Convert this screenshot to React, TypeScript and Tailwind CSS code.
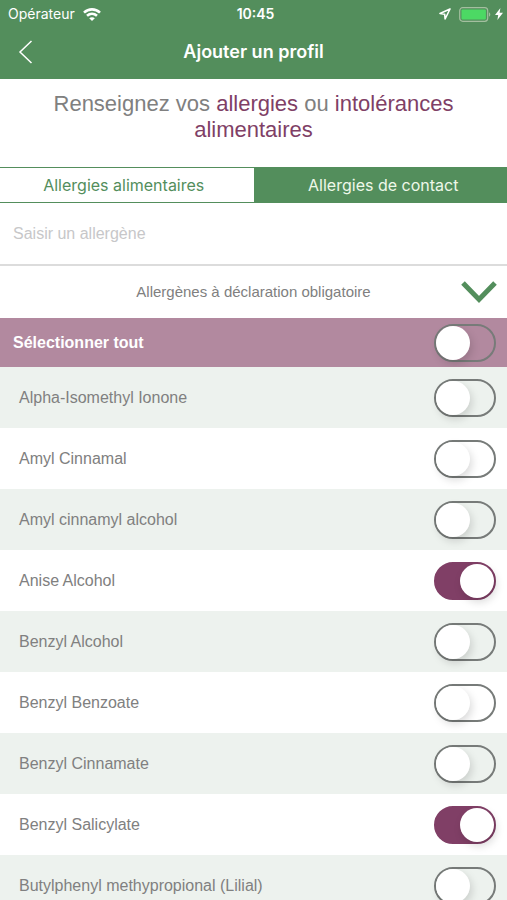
import React, { useState } from 'react';

const allergens = [
  'Alpha-Isomethyl Ionone',
  'Amyl Cinnamal',
  'Amyl cinnamyl alcohol',
  'Anise Alcohol',
  'Benzyl Alcohol',
  'Benzyl Benzoate',
  'Benzyl Cinnamate',
  'Benzyl Salicylate',
  'Butylphenyl methypropional (Lilial)',
];

function StatusBar() {
  return (
    <div className="grid h-7 grid-cols-3 items-center pl-2 pr-1 font-['Inter',sans-serif] text-sm">
      <div className="flex items-center gap-2">
        <span>Opérateur</span>
        <svg width="18" height="13" viewBox="0 0 18 13" fill="none" stroke="currentColor" strokeWidth="2.6" aria-hidden="true">
          <path d="M1 4.6C5.6.3 12.4.3 17 4.6" />
          <path d="M4 7.8c3-2.7 7-2.7 10 0" />
          <path d="M9 13 6.2 10.2c1.6-1.4 4-1.4 5.6 0z" fill="currentColor" stroke="none" />
        </svg>
      </div>
      <span className="text-center font-semibold">10:45</span>
      <div className="flex items-center justify-end">
        <svg className="mr-2" width="12" height="12" viewBox="0 0 12 12" fill="none" stroke="currentColor" strokeWidth="1.6" strokeLinejoin="round" aria-hidden="true">
          <path d="M11 1 1 5.5l4.7.8.4 4.7z" />
        </svg>
        <svg className="mr-1" width="32" height="15" viewBox="0 0 32 15" aria-hidden="true">
          <rect x=".7" y=".7" width="28" height="13.6" rx="3" fill="none" stroke="#a3bf9f" strokeWidth="1.2" />
          <rect x="2.5" y="2.5" width="24.4" height="10" rx="1" fill="#4cd964" />
          <path d="M30 5.3c1.8.8 1.8 3.6 0 4.4z" fill="#a3bf9f" />
        </svg>
        <svg width="8" height="12" viewBox="0 0 8 12" fill="currentColor" aria-hidden="true">
          <path d="M5.4 0 0 7h3.2L2.4 12 8 4.8H4.6z" />
        </svg>
      </div>
    </div>
  );
}

function Toggle({ id, defaultChecked }: { id: string; defaultChecked?: boolean }) {
  return (
    <input
      id={id}
      type="checkbox"
      defaultChecked={defaultChecked}
      className="flex h-[38px] w-[62px] shrink-0 cursor-pointer appearance-none items-center rounded-full border-2 border-[#777b79] before:size-[34px] before:rounded-full before:bg-white before:shadow-[2px_4px_8px_rgba(0,0,0,0.15)] before:content-[''] checked:justify-end checked:border-[#803f66] checked:bg-[#803f66]"
    />
  );
}

export default function App() {
  const [tab, setTab] = useState<'food' | 'contact'>('contact');
  const tabOn = 'bg-[#538e5c] text-[#eef8e9]';
  const tabOff = 'bg-white text-[#538e5c]';

  return (
    <div className="flex h-screen flex-col overflow-hidden bg-white font-['Liberation_Sans',Arial,sans-serif] text-[#808080]">
      <header className="shrink-0 bg-[#538e5c] text-white">
        <StatusBar />
        <div className="grid h-[51px] grid-cols-[48px_1fr_48px] items-center pb-1">
          <button type="button" aria-label="Retour" className="flex h-full items-center pl-[18px]">
            <svg width="15" height="24" viewBox="0 0 15 24" fill="none" stroke="currentColor" strokeWidth="1.5" aria-hidden="true">
              <path d="M13.5 1 2 12l11.5 11" />
            </svg>
          </button>
          <h1 className="text-center font-['Inter',sans-serif] text-lg font-semibold">Ajouter un profil</h1>
        </div>
      </header>

      <h2 className="shrink-0 px-10 pb-6 pt-3 text-center text-[22px] leading-[26px]">
        Renseignez vos <span className="text-[#803f66]">allergies</span> ou{' '}
        <span className="text-[#803f66]">intolérances</span> <span className="text-[#803f66]">alimentaires</span>
      </h2>

      <div className="grid h-9 shrink-0 grid-cols-2 border-y border-[#538e5c] font-['Inter',sans-serif] text-base">
        <button type="button" onClick={() => setTab('food')} className={`pr-1.5 ${tab === 'food' ? tabOn : tabOff}`}>
          Allergies alimentaires
        </button>
        <button type="button" onClick={() => setTab('contact')} className={`pl-1.5 ${tab === 'contact' ? tabOn : tabOff}`}>
          Allergies de contact
        </button>
      </div>

      <input
        type="text"
        aria-label="Saisir un allergène"
        placeholder="Saisir un allergène"
        className="h-[63px] shrink-0 border-b-2 border-[#dcdcdc] px-[13px] text-base outline-none placeholder:text-[#c7c7c9]"
      />

      <button type="button" className="grid h-[52px] shrink-0 grid-cols-[48px_1fr_48px] items-center text-[15px]">
        <span className="col-start-2">Allergènes à déclaration obligatoire</span>
        <svg className="ml-0.5" width="36" height="24" viewBox="0 0 36 24" fill="none" stroke="#538e5c" strokeWidth="5" aria-hidden="true">
          <path d="M2 3 18 19.5 34 3" />
        </svg>
      </button>

      <div className="flex h-[49px] shrink-0 items-center justify-between bg-[#b2899f] pl-[13px] pr-[11px] text-base font-bold text-white">
        <label htmlFor="select-all">Sélectionner tout</label>
        <Toggle id="select-all" />
      </div>

      <ul className="min-h-0 flex-1 overflow-y-auto text-base [scrollbar-width:none]">
        {allergens.map((name, i) => (
          <li key={name} className="flex h-[61px] items-center justify-between pl-[19px] pr-[11px] pt-px odd:bg-[#edf2ee]">
            <label htmlFor={`allergen-${i}`}>{name}</label>
            <Toggle id={`allergen-${i}`} defaultChecked={name === 'Anise Alcohol' || name === 'Benzyl Salicylate'} />
          </li>
        ))}
      </ul>
    </div>
  );
}
